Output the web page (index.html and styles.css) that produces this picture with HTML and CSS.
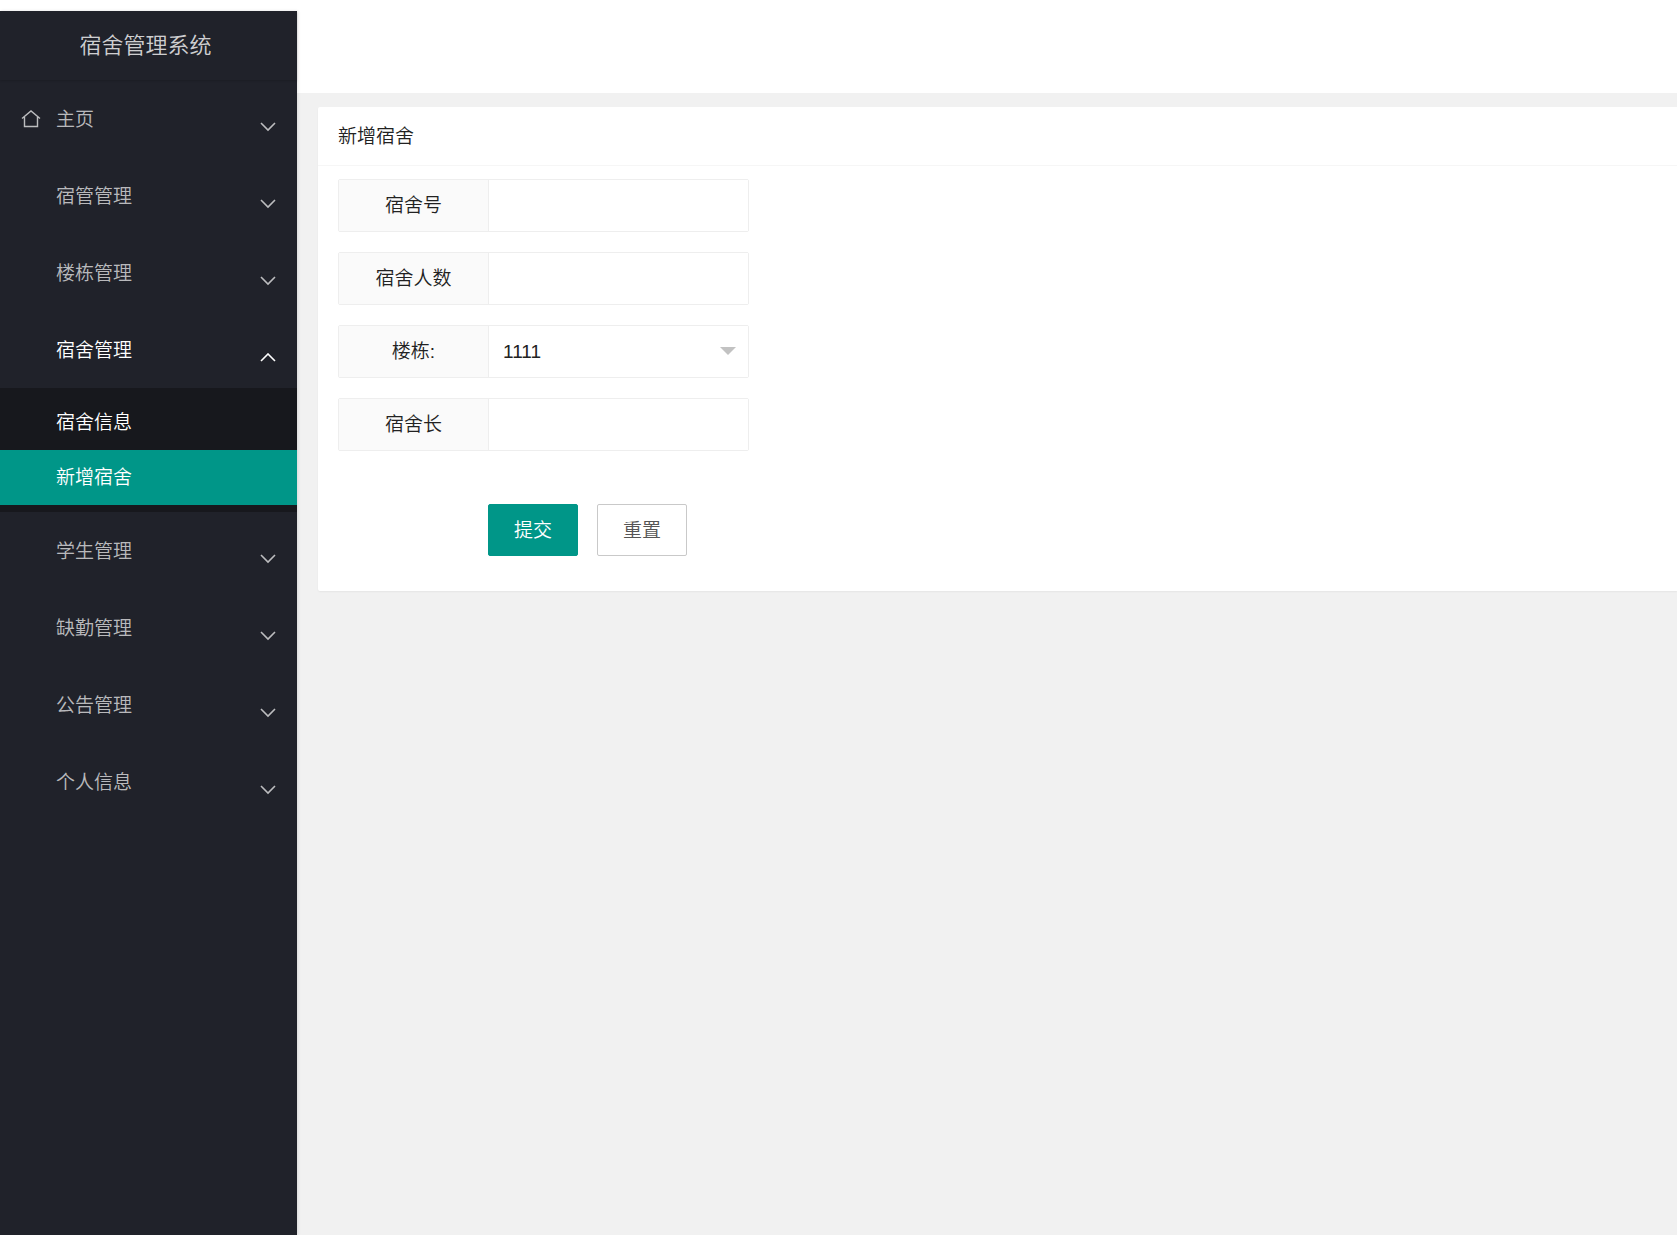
FILE: index.html
```html
<!DOCTYPE html>
<html lang="zh-CN">
<head>
<meta charset="utf-8">
<meta name="viewport" content="width=device-width, initial-scale=1">
<title>宿舍管理系统</title>
<link rel="stylesheet" href="styles.css">
</head>
<body>
<div class="layout">
  <aside class="sidebar">
    <div class="logo">宿舍管理系统</div>
    <nav>
      <ul class="menu">
        <li><a class="menu-link" href="#">
          <svg class="home" viewBox="0 0 20 18" aria-hidden="true"><path d="M1 8.500 10 1l9 7.500M3.500 7v9.500h13V7"/></svg>
          <span class="menu-text">主页</span>
          <svg class="chevron" viewBox="0 0 16 10" aria-hidden="true"><path d="M1 1l7 7 7-7"/></svg></a></li>
        <li><a class="menu-link" href="#"><span class="menu-text">宿管管理</span>
          <svg class="chevron" viewBox="0 0 16 10" aria-hidden="true"><path d="M1 1l7 7 7-7"/></svg></a></li>
        <li><a class="menu-link" href="#"><span class="menu-text">楼栋管理</span>
          <svg class="chevron" viewBox="0 0 16 10" aria-hidden="true"><path d="M1 1l7 7 7-7"/></svg></a></li>
        <li><a class="menu-link open" href="#"><span class="menu-text">宿舍管理</span>
          <svg class="chevron" viewBox="0 0 16 10" aria-hidden="true"><path d="M1 8l7-7 7 7"/></svg></a>
          <ul class="submenu">
            <li><a class="submenu-link" href="#">宿舍信息</a></li>
            <li><a class="submenu-link current" href="#" aria-current="page">新增宿舍</a></li>
          </ul></li>
        <li><a class="menu-link" href="#"><span class="menu-text">学生管理</span>
          <svg class="chevron" viewBox="0 0 16 10" aria-hidden="true"><path d="M1 1l7 7 7-7"/></svg></a></li>
        <li><a class="menu-link" href="#"><span class="menu-text">缺勤管理</span>
          <svg class="chevron" viewBox="0 0 16 10" aria-hidden="true"><path d="M1 1l7 7 7-7"/></svg></a></li>
        <li><a class="menu-link" href="#"><span class="menu-text">公告管理</span>
          <svg class="chevron" viewBox="0 0 16 10" aria-hidden="true"><path d="M1 1l7 7 7-7"/></svg></a></li>
        <li><a class="menu-link" href="#"><span class="menu-text">个人信息</span>
          <svg class="chevron" viewBox="0 0 16 10" aria-hidden="true"><path d="M1 1l7 7 7-7"/></svg></a></li>
      </ul>
    </nav>
  </aside>
  <div class="page">
    <header class="topbar"></header>
    <main class="content">
      <section class="card">
        <h1 class="card-title">新增宿舍</h1>
        <form class="form">
          <div class="field">
            <label class="label" for="room">宿舍号</label>
            <input class="control" id="room" type="text">
          </div>
          <div class="field">
            <label class="label" for="count">宿舍人数</label>
            <input class="control" id="count" type="text">
          </div>
          <div class="field select-field">
            <label class="label" for="building">楼栋:</label>
            <select class="control" id="building"><option>1111</option></select>
          </div>
          <div class="field">
            <label class="label" for="leader">宿舍长</label>
            <input class="control" id="leader" type="text">
          </div>
          <div class="actions">
            <button class="btn btn-primary" type="submit">提交</button>
            <button class="btn" type="reset">重置</button>
          </div>
        </form>
      </section>
    </main>
  </div>
</div>
</body>
</html>
```
FILE: styles.css
```css
* { box-sizing: border-box; }

body {
  margin: 0;
  background: #fff;
  color: #222;
  font: 350 19px/24px "Liberation Sans", "Noto Sans CJK SC", sans-serif;
}

ul { margin: 0; padding: 0; list-style: none; }
a { text-decoration: none; }

.layout { display: flex; min-height: 100vh; }

/* Sidebar */
.sidebar {
  flex: none;
  width: 297px;
  margin-top: 11px;
  background: #20222a;
  box-shadow: 1px 0 3px rgba(0, 0, 0, .1);
  z-index: 1;
}

.logo {
  height: 69px;
  padding-right: 6px;
  color: rgba(255, 255, 255, .8);
  font-size: 22px;
  line-height: 70px;
  text-align: center;
  box-shadow: 0 1px 2px rgba(0, 0, 0, .15);
}

.menu-link {
  display: flex;
  align-items: center;
  height: 77px;
  padding: 2px 21px 0;
  color: rgba(255, 255, 255, .7);
}

.menu-text { margin-left: 35px; }
.home + .menu-text { margin-left: 15px; }

.home, .chevron {
  fill: none;
  stroke: currentColor;
  stroke-width: 1.6;
}

.home {
  width: 20px;
  height: 18px;
  margin-bottom: 2px;
  stroke-width: 1.4;
}

.chevron {
  width: 16px;
  height: 10px;
  margin: 14px 0 0 auto;
}

.open { color: #fff; }

.submenu {
  padding: 7px 0;
  background: #17181d;
}

.submenu-link {
  display: block;
  height: 55px;
  padding-left: 56px;
  color: #fff;
  line-height: 56px;
}

.current { background: #009688; }

/* Page */
.page {
  flex: 1;
  display: flex;
  flex-direction: column;
  min-width: 0;
}

.topbar { height: 93px; }

.content {
  flex: 1;
  padding: 14px 0 14px 21px;
  background: #f1f1f1;
}

.card {
  background: #fff;
  border-radius: 2px 0 0 2px;
  box-shadow: 0 1px 2px rgba(0, 0, 0, .05);
}

.card-title {
  height: 59px;
  margin: 0;
  padding: 0 20px;
  border-bottom: 1px solid #f6f6f6;
  font-size: 19px;
  font-weight: 350;
  line-height: 59px;
}

.form {
  display: flex;
  flex-direction: column;
  gap: 20px;
  padding: 13px 20px 35px;
}

.field {
  position: relative;
  display: flex;
  width: 411px;
  max-width: 100%;
  height: 53px;
  border: 1px solid #eee;
  border-radius: 2px;
}

.label {
  flex: none;
  width: 150px;
  background: #fafafa;
  border-right: 1px solid #eee;
  line-height: 52px;
  text-align: center;
}

.control {
  flex: 1;
  min-width: 0;
  padding: 0 14px;
  border: 0;
  background: #fff;
  color: #222;
  font: inherit;
  appearance: none;
}

.select-field::after {
  content: "";
  position: absolute;
  top: 21px;
  right: 12px;
  border: 8px solid transparent;
  border-top-color: #c2c2c2;
  border-bottom: 0;
  pointer-events: none;
}

.actions {
  display: flex;
  gap: 19px;
  padding: 33px 0 0 150px;
}

.btn {
  width: 90px;
  height: 52px;
  padding: 2px 0 0;
  border: 1px solid #c9c9c9;
  border-radius: 2px;
  background: #fff;
  color: #555;
  font: inherit;
}

.btn-primary {
  border-color: #009688;
  background: #009688;
  color: #fff;
}
```
